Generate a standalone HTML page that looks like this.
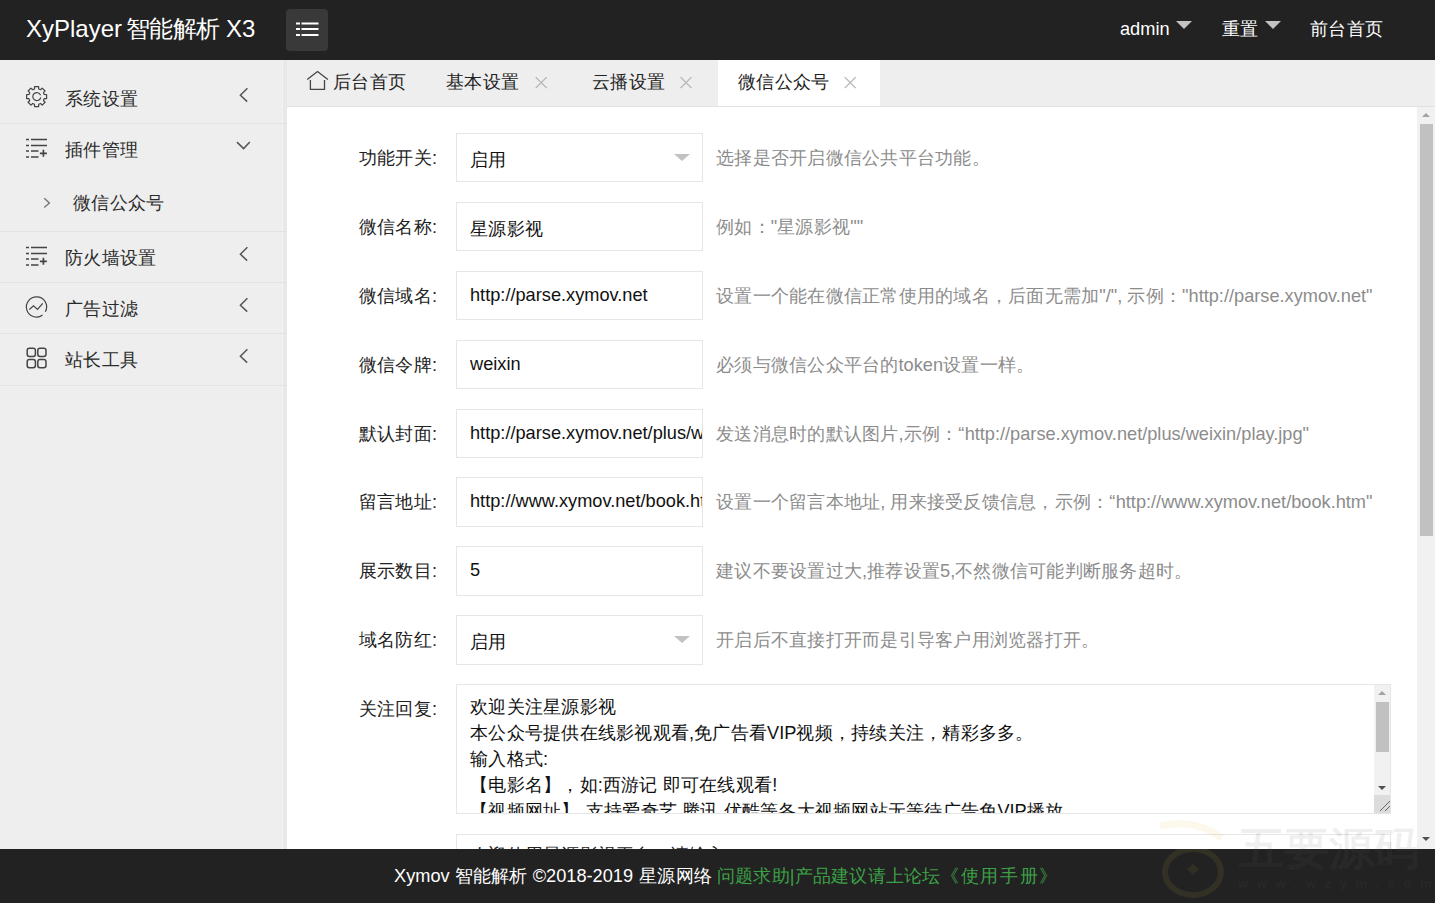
<!DOCTYPE html>
<html><head><meta charset="utf-8">
<style>
*{margin:0;padding:0;box-sizing:border-box}
html,body{width:1435px;height:903px;overflow:hidden;background:#fff;font-family:"Liberation Sans",sans-serif;color:#333}
body{position:relative}
div{position:absolute;white-space:nowrap}
#hd{left:0;top:0;width:1435px;height:60px;background:#222}
#logo{left:26px;top:14px;font-size:24px;color:#fff;line-height:30px}
#flex{left:286px;top:9px;width:42px;height:42px;background:#393939;border-radius:4px}
.tn{top:17px;font-size:18.2px;color:#fff;line-height:24px}
.tri{width:0;height:0;border-style:solid;border-color:#c2c2c2 transparent transparent transparent;border-width:8px 8px 0 8px}
#side{left:0;top:60px;width:287px;height:789px;background:#eee}
.sep{left:0;width:287px;height:1px;background:#e2e2e2}
.mt{left:65px;font-size:18.2px;color:#2a2a2a;line-height:24px}
#tabs{left:287px;top:60px;width:1148px;height:47px;background:#eee;border-bottom:1px solid #e2e2e2}
.tb{top:10px;font-size:18.2px;color:#222;line-height:24px}
#act{left:431px;top:0;width:162px;height:46px;background:#fff}
.lb{left:287px;width:150px;text-align:right;font-size:18.2px;color:#222;line-height:24px}
.ip{left:456px;width:247px;height:49px;border:1px solid #e6e6e6;background:#fff;overflow:hidden}
.iv{left:13px;font-size:18.2px;color:#111;line-height:24px}
.hp{left:716px;font-size:18.2px;color:#8c8c8c;line-height:24px}
#ta{left:456px;top:684px;width:935px;height:130px;border:1px solid #e6e6e6;background:#fff;overflow:hidden}
#tat{left:13px;top:9px;font-size:18.2px;line-height:26px;color:#111}
#ta2{left:456px;top:834px;width:935px;height:60px;border:1px solid #e6e6e6;background:#fff;overflow:hidden}
#sb{left:1417px;top:107px;width:18px;height:742px;background:#f1f1f1}
#ft{left:0;top:849px;width:1435px;height:54px;background:#222}
#ftt{left:394px;top:15px;font-size:18.2px;line-height:24px;color:#fff}
#ftt span{color:#3ca046}
svg{position:absolute;overflow:visible}
.bk i.c{letter-spacing:1.65px!important}
i.c{font-style:normal;letter-spacing:0.25px}
</style></head><body>
<div id="side"></div>
<div style="left:282px;top:60px;width:1px;height:789px;background:#f3f3f3"></div>
<div style="left:283px;top:60px;width:4px;height:789px;background:#e8e8e8"></div>
<div class="sep" style="top:123px"></div>
<div class="sep" style="top:231px"></div>
<div class="sep" style="top:282px"></div>
<div class="sep" style="top:333px"></div>
<div class="sep" style="top:385px"></div>
<div class="mt" style="top:87px"><i class="c">系统设置</i></div>
<div class="mt" style="top:138px"><i class="c">插件管理</i></div>
<div class="mt" style="left:73px;top:191px"><i class="c">微信公众号</i></div>
<div class="mt" style="top:246px"><i class="c">防火墙设置</i></div>
<div class="mt" style="top:297px"><i class="c">广告过滤</i></div>
<div class="mt" style="top:348px"><i class="c">站长工具</i></div>
<svg width="1435" height="903" style="left:0;top:0" fill="none" stroke="#444" stroke-width="1.2">
  <path stroke-linejoin="round" d="M34.49 88.99L34.57 86.60L38.63 86.60L38.71 88.99L40.49 89.73L42.24 88.10L45.10 90.96L43.47 92.71L44.21 94.49L46.60 94.57L46.60 98.63L44.21 98.71L43.47 100.49L45.10 102.24L42.24 105.10L40.49 103.47L38.71 104.21L38.63 106.60L34.57 106.60L34.49 104.21L32.71 103.47L30.96 105.10L28.10 102.24L29.73 100.49L28.99 98.71L26.60 98.63L26.60 94.57L28.99 94.49L29.73 92.71L28.10 90.96L30.96 88.10L32.71 89.73Z"/>
  <path d="M40.74 97.29A4.0 4.0 0 1 1 40.56 95.23"/>
  <g stroke-width="1.7" stroke="#444">
    <path d="M26 139.5h3M31 139.5h16M26 145.5h3M31 145.5h16M26 151h3M31 151h7.5M26 157h3M31 157h7.5"/>
    <path d="M43.4 149.8v7M39.9 153.3h7" />
  </g>
  <g stroke-width="1.7" stroke="#444">
    <path d="M26 247.5h3M31 247.5h16M26 253.5h3M31 253.5h16M26 259h3M31 259h7.5M26 265h3M31 265h7.5"/>
    <path d="M43.4 257.8v7M39.9 261.3h7" />
  </g>
  <path d="M42.58 314.97A10.1 10.1 0 1 1 45.33 311.80"/>
  <path d="M29.4 309.5L33.5 305.8L37.5 309.5L42.7 303.3" />
  <g stroke-width="1.5">
    <rect x="27.2" y="348.2" width="8.2" height="8.2" rx="2.2"/>
    <rect x="37.8" y="348.2" width="8.2" height="8.2" rx="2.2"/>
    <rect x="27.2" y="359.6" width="8.2" height="8.2" rx="2.2"/>
    <rect x="37.8" y="359.6" width="8.2" height="8.2" rx="2.2"/>
  </g>
  <g stroke="#555" stroke-width="1.5">
    <path d="M247.4 88.3L240.4 95.2L247.2 101.6"/>
    <path d="M237 142.1L243.6 148.6L249.8 142"/>
    <path d="M247.4 247.3L240.4 254.2L247.2 260.6"/>
    <path d="M247.4 298.3L240.4 305.2L247.2 311.6"/>
    <path d="M247.4 349.3L240.4 356.2L247.2 362.6"/>
  </g>
  <path stroke="#777" stroke-width="1.4" d="M44.2 198.2L49.4 203L44.2 207.6"/>
</svg>
<div id="hd">
  <div id="logo">XyPlayer</div><div id="logo" style="left:125.7px;letter-spacing:-0.5px">智能解析</div><div id="logo" style="left:226px">X3</div>
  <div id="flex"></div>
  <div class="tn" style="left:1120px">admin</div>
  <div class="tri" style="left:1176px;top:21px"></div>
  <div class="tn" style="left:1222px"><i class="c">重置</i></div>
  <div class="tri" style="left:1265px;top:21px"></div>
  <div class="tn" style="left:1310px"><i class="c">前台首页</i></div>
  <svg width="40" height="40" style="left:286px;top:9px" stroke="#fff" stroke-width="2" fill="none">
    <path d="M10 14.5h4M15.5 14.5h17M10 20h4M15.5 20h17M10 26h4M15.5 26h17"/>
  </svg>
</div>
<div id="tabs">
  <div id="act"></div>
  <div class="tb" style="left:46px"><i class="c">后台首页</i></div>
  <div class="tb" style="left:159px"><i class="c">基本设置</i></div>
  <div class="tb" style="left:305px"><i class="c">云播设置</i></div>
  <div class="tb" style="left:451px"><i class="c">微信公众号</i></div>
  <svg width="1148" height="47" style="left:0;top:0" fill="none">
    <path stroke="#444" stroke-width="1.3" d="M20.2 19.6L30.5 11.6L40.9 19.6M23.4 20v9.3h14.1V20"/>
    <g stroke="#b4b4b4" stroke-width="1.3">
      <path d="M248.7 17.1L259.7 28.1M259.7 17.1L248.7 28.1"/>
      <path d="M393.5 17.1L404.5 28.1M404.5 17.1L393.5 28.1"/>
      <path d="M557.7 17.1L568.7 28.1M568.7 17.1L557.7 28.1"/>
    </g>
  </svg>
</div>
<div class="lb" style="top:146px"><i class="c">功能开关</i>:</div>
<div class="ip" style="top:133px;height:49px"><div class="iv" style="top:14px"><i class="c">启用</i></div></div>
<div class="tri" style="left:674px;top:154px;border-width:7px 8px 0 8px;border-top-color:#c2c2c2"></div>
<div class="hp" style="top:146px"><i class="c">选择是否开启微信公共平台功能。</i></div>
<div class="lb" style="top:215px"><i class="c">微信名称</i>:</div>
<div class="ip" style="top:202px;height:49px"><div class="iv" style="top:14px"><i class="c">星源影视</i></div></div>
<div class="hp" style="top:215px"><i class="c">例如：</i>"<i class="c">星源影视</i>""</div>
<div class="lb" style="top:284px"><i class="c">微信域名</i>:</div>
<div class="ip" style="top:271px;height:49px"><div class="iv" style="top:11px">http://parse.xymov.net</div></div>
<div class="hp" style="top:284px"><i class="c">设置一个能在微信正常使用的域名，后面无需加</i>"/", <i class="c">示例：</i>"http://parse.xymov.net"</div>
<div class="lb" style="top:353px"><i class="c">微信令牌</i>:</div>
<div class="ip" style="top:340px;height:49px"><div class="iv" style="top:11px">weixin</div></div>
<div class="hp" style="top:353px"><i class="c">必须与微信公众平台的</i>token<i class="c">设置一样。</i></div>
<div class="lb" style="top:422px"><i class="c">默认封面</i>:</div>
<div class="ip" style="top:409px;height:49px"><div class="iv" style="top:11px">http://parse.xymov.net/plus/weixin/play.jpg</div></div>
<div class="hp" style="top:422px"><i class="c">发送消息时的默认图片</i>,<i class="c">示例：“</i>http://parse.xymov.net/plus/weixin/play.jpg"</div>
<div class="lb" style="top:490px"><i class="c">留言地址</i>:</div>
<div class="ip" style="top:477px;height:50px"><div class="iv" style="top:11px">http://www.xymov.net/book.htm</div></div>
<div class="hp" style="top:490px"><i class="c">设置一个留言本地址</i>, <i class="c">用来接受反馈信息，示例：“</i>http://www.xymov.net/book.htm"</div>
<div class="lb" style="top:559px"><i class="c">展示数目</i>:</div>
<div class="ip" style="top:546px;height:50px"><div class="iv" style="top:11px">5</div></div>
<div class="hp" style="top:559px"><i class="c">建议不要设置过大</i>,<i class="c">推荐设置</i>5,<i class="c">不然微信可能判断服务超时。</i></div>
<div class="lb" style="top:628px"><i class="c">域名防红</i>:</div>
<div class="ip" style="top:615px;height:50px"><div class="iv" style="top:14px"><i class="c">启用</i></div></div>
<div class="tri" style="left:674px;top:636px;border-width:7px 8px 0 8px;border-top-color:#c2c2c2"></div>
<div class="hp" style="top:628px"><i class="c">开启后不直接打开而是引导客户用浏览器打开。</i></div>
<div class="lb" style="top:697px"><i class="c">关注回复</i>:</div>
<div id="ta"><div id="tat"><i class="c">欢迎关注星源影视</i><br><i class="c">本公众号提供在线影视观看</i>,<i class="c">免广告看</i>VIP<i class="c">视频，持续关注，精彩多多。</i><br><i class="c">输入格式</i>:<br><i class="c">【电影名】，如</i>:<i class="c">西游记</i> <i class="c">即可在线观看</i>!<br><i class="c">【视频网址】</i><span style="margin-right:-12px"><i class="c">，</i></span><i class="c">支持爱奇艺</i>,<i class="c">腾讯</i>,<i class="c">优酷等各大视频网站无等待广告免</i>VIP<i class="c">播放</i></div>
  <div style="left:917px;top:0;width:17px;height:128px;background:#f1f1f1"></div>
  <div style="left:919px;top:17px;width:13px;height:50px;background:#c1c1c1"></div>
  <div class="tri" style="left:921px;top:6px;border-width:0 4px 4px 4px;border-color:transparent transparent #a3a3a3 transparent"></div>
  <div class="tri" style="left:921px;top:101px;border-width:4px 4px 0 4px;border-color:#505050 transparent transparent transparent"></div>
  <div style="left:917px;top:110px;width:17px;height:18px;background:#dcdcdc"></div>
  <svg width="17" height="17" style="left:917px;top:110px" stroke="#666" stroke-width="1"><path d="M6 16L16 6M11 16L16 11"/></svg>
</div>
<div id="ta2"><div id="tat" style="top:7px;color:#222"><i class="c">欢迎使用星源影视平台，请输入</i></div></div>
<div id="sb">
  <div style="left:3px;top:17px;width:13px;height:412px;background:#c1c1c1"></div>
  <div class="tri" style="left:5px;top:6px;border-width:0 4px 4px 4px;border-color:transparent transparent #a3a3a3 transparent"></div>
  <div class="tri" style="left:5px;top:730px;border-width:4px 4px 0 4px;border-color:#505050 transparent transparent transparent"></div>
</div>
<div id="ft"><div id="ftt">Xymov <i class="c">智能解析</i> <span style="color:#fff;margin-left:0px">©2018-2019</span> <span style="color:#fff;margin-left:1px"><i class="c">星源网络</i></span> <span style="margin-left:-0.4px"><i class="c">问题求助</i>|<i class="c">产品建议请上论坛</i></span> <span class="bk" style="margin-left:-4.6px"><i class="c">《使用手册》</i></span></div></div>
<div style="left:1150px;top:800px;width:285px;height:49px;overflow:hidden">
  <div style="left:89px;top:23px;font-family:'Liberation Serif',serif;font-weight:bold;font-size:45px;line-height:52px;color:rgba(0,0,0,0.065)">五要源码</div>
  <svg width="100" height="100" style="left:0;top:10px" fill="none"><path d="M10 16Q45 8 72 28" stroke="rgba(230,190,60,0.10)" stroke-width="7"/></svg>
</div>
<div style="left:1150px;top:849px;width:285px;height:54px;overflow:hidden">
  <div style="left:89px;top:-26px;font-family:'Liberation Serif',serif;font-weight:bold;font-size:45px;line-height:52px;color:rgba(255,255,255,0.05)">五要源码</div>
  <div style="left:88px;top:27px;font-family:'Liberation Sans',sans-serif;font-weight:bold;font-size:13px;line-height:16px;letter-spacing:8.6px;color:rgba(255,255,255,0.045)">www.wzym.com</div>
  <svg width="100" height="100" style="left:0;top:-39px" fill="none">
    <ellipse cx="43" cy="62" rx="28" ry="23" stroke="rgba(190,160,60,0.11)" stroke-width="6"/>
    <path d="M43 54L49 59L43 65L37 59Z" fill="rgba(190,160,60,0.1)"/>
  </svg>
</div>
</body></html>
